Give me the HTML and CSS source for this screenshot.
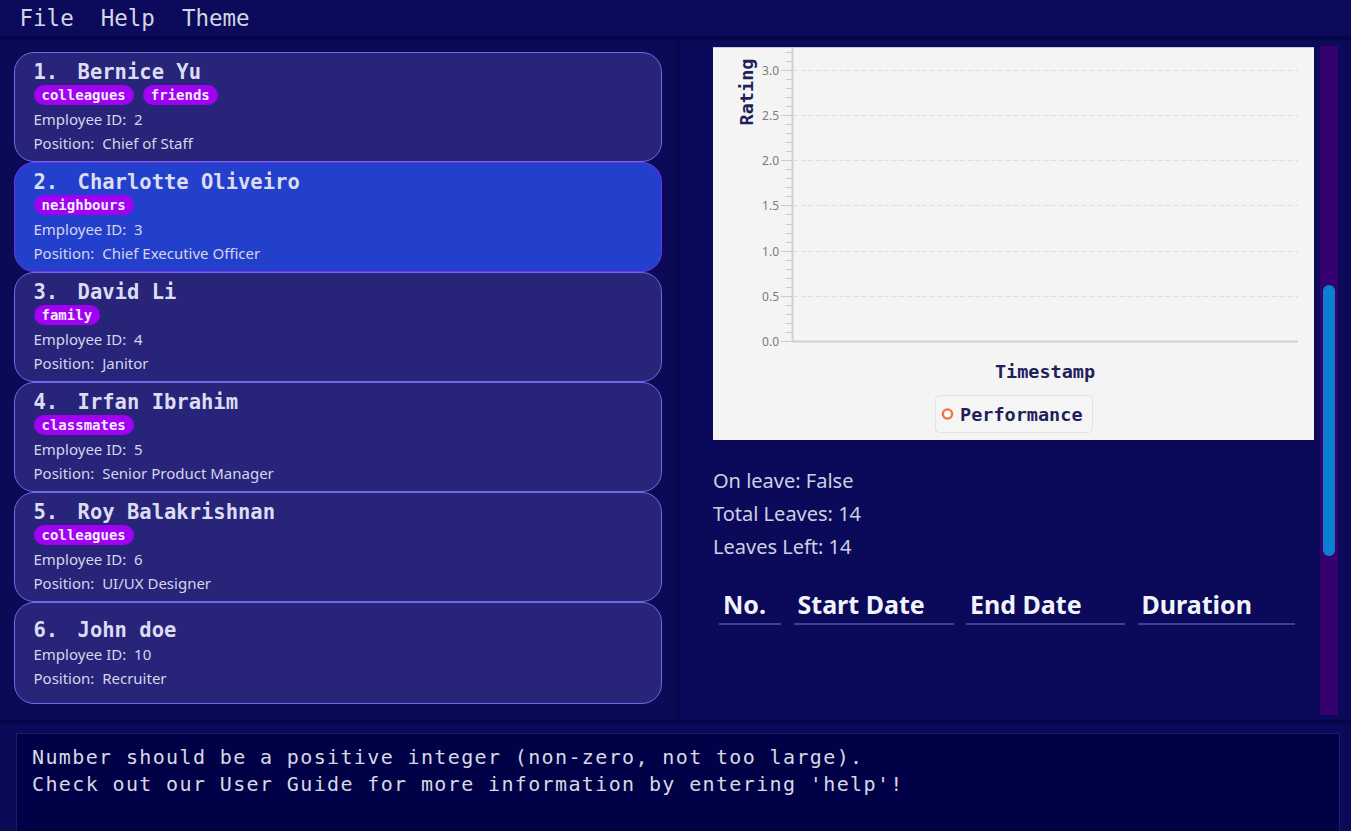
FILE: index.html
```html
<!DOCTYPE html>
<html lang="en">
<head>
<meta charset="utf-8">
<title>Employee Manager</title>
<link rel="stylesheet" href="styles.css">
</head>
<body>
<div class="app">
  <div class="menubar">
    <span class="menu-item">File</span>
    <span class="menu-item">Help</span>
    <span class="menu-item">Theme</span>
  </div>
  <div class="main">
    <div class="list-panel">
      <div class="card">
        <div class="name"><span class="index">1.</span>Bernice Yu</div>
        <div class="tags"><span class="tag">colleagues</span><span class="tag">friends</span></div>
        <div class="info">Employee ID:&nbsp; 2</div>
        <div class="info">Position:&nbsp; Chief of Staff</div>
      </div>
      <div class="card selected">
        <div class="name"><span class="index">2.</span>Charlotte Oliveiro</div>
        <div class="tags"><span class="tag">neighbours</span></div>
        <div class="info">Employee ID:&nbsp; 3</div>
        <div class="info">Position:&nbsp; Chief Executive Officer</div>
      </div>
      <div class="card">
        <div class="name"><span class="index">3.</span>David Li</div>
        <div class="tags"><span class="tag">family</span></div>
        <div class="info">Employee ID:&nbsp; 4</div>
        <div class="info">Position:&nbsp; Janitor</div>
      </div>
      <div class="card">
        <div class="name"><span class="index">4.</span>Irfan Ibrahim</div>
        <div class="tags"><span class="tag">classmates</span></div>
        <div class="info">Employee ID:&nbsp; 5</div>
        <div class="info">Position:&nbsp; Senior Product Manager</div>
      </div>
      <div class="card">
        <div class="name"><span class="index">5.</span>Roy Balakrishnan</div>
        <div class="tags"><span class="tag">colleagues</span></div>
        <div class="info">Employee ID:&nbsp; 6</div>
        <div class="info">Position:&nbsp; UI/UX Designer</div>
      </div>
      <div class="card no-tags">
        <div class="name"><span class="index">6.</span>John doe</div>
        <div class="info">Employee ID:&nbsp; 10</div>
        <div class="info">Position:&nbsp; Recruiter</div>
      </div>
    </div>
    <div class="panel-divider"></div>
    <div class="detail-panel">
      <div class="detail-content">
        <div class="chart">
          <svg width="601" height="393" viewBox="0 0 601 393" xmlns="http://www.w3.org/2000/svg">
            <rect x="0" y="0" width="601" height="393" fill="#f4f4f4"/>
            <line x1="0" y1="0.5" x2="601" y2="0.5" stroke="#c9c9ea" stroke-width="1"/>
            <g stroke="#dedede" stroke-width="1" stroke-dasharray="5 2.6" shape-rendering="crispEdges">
              <line x1="80" y1="249.5" x2="585" y2="249.5"/>
              <line x1="80" y1="204.5" x2="585" y2="204.5"/>
              <line x1="80" y1="158.5" x2="585" y2="158.5"/>
              <line x1="80" y1="113.5" x2="585" y2="113.5"/>
              <line x1="80" y1="68.5" x2="585" y2="68.5"/>
              <line x1="80" y1="23.5" x2="585" y2="23.5"/>
            </g>
            <g stroke="#cbcbcb" stroke-width="1" shape-rendering="crispEdges">
              <line x1="68" y1="294.5" x2="79" y2="294.5"/>
              <line x1="73" y1="285.5" x2="79" y2="285.5"/>
              <line x1="73" y1="276.5" x2="79" y2="276.5"/>
              <line x1="73" y1="267.5" x2="79" y2="267.5"/>
              <line x1="73" y1="258.5" x2="79" y2="258.5"/>
              <line x1="68" y1="249.5" x2="79" y2="249.5"/>
              <line x1="73" y1="240.5" x2="79" y2="240.5"/>
              <line x1="73" y1="231.5" x2="79" y2="231.5"/>
              <line x1="73" y1="222.5" x2="79" y2="222.5"/>
              <line x1="73" y1="213.5" x2="79" y2="213.5"/>
              <line x1="68" y1="204.5" x2="79" y2="204.5"/>
              <line x1="73" y1="195.5" x2="79" y2="195.5"/>
              <line x1="73" y1="186.5" x2="79" y2="186.5"/>
              <line x1="73" y1="177.5" x2="79" y2="177.5"/>
              <line x1="73" y1="167.5" x2="79" y2="167.5"/>
              <line x1="68" y1="158.5" x2="79" y2="158.5"/>
              <line x1="73" y1="149.5" x2="79" y2="149.5"/>
              <line x1="73" y1="140.5" x2="79" y2="140.5"/>
              <line x1="73" y1="131.5" x2="79" y2="131.5"/>
              <line x1="73" y1="122.5" x2="79" y2="122.5"/>
              <line x1="68" y1="113.5" x2="79" y2="113.5"/>
              <line x1="73" y1="104.5" x2="79" y2="104.5"/>
              <line x1="73" y1="95.5" x2="79" y2="95.5"/>
              <line x1="73" y1="86.5" x2="79" y2="86.5"/>
              <line x1="73" y1="77.5" x2="79" y2="77.5"/>
              <line x1="68" y1="68.5" x2="79" y2="68.5"/>
              <line x1="73" y1="59.5" x2="79" y2="59.5"/>
              <line x1="73" y1="50.5" x2="79" y2="50.5"/>
              <line x1="73" y1="41.5" x2="79" y2="41.5"/>
              <line x1="73" y1="32.5" x2="79" y2="32.5"/>
              <line x1="68" y1="23.5" x2="79" y2="23.5"/>
              <line x1="73" y1="14.5" x2="79" y2="14.5"/>
              <line x1="73" y1="5.5" x2="79" y2="5.5"/>
            </g>
            <line x1="79.5" y1="1" x2="79.5" y2="295" stroke="#d0d0d0" stroke-width="2"/>
            <line x1="79" y1="294.5" x2="585" y2="294.5" stroke="#d0d0d0" stroke-width="2"/>
            <g class="tick-label" text-anchor="end">
              <text x="66" y="298.5">0.0</text>
              <text x="66" y="253.5">0.5</text>
              <text x="66" y="208.5">1.0</text>
              <text x="66" y="162.5">1.5</text>
              <text x="66" y="117.5">2.0</text>
              <text x="66" y="72.5">2.5</text>
              <text x="66" y="27.5">3.0</text>
            </g>
            <text class="axis-title" transform="translate(40,45) rotate(-90)" text-anchor="middle">Rating</text>
            <text class="axis-title" x="332" y="331" text-anchor="middle">Timestamp</text>
            <rect x="222.5" y="348.5" width="157" height="37" rx="4" fill="#f5f5f5" stroke="#e3e3e3"/>
            <circle cx="234.5" cy="367" r="4.6" fill="#ffffff" stroke="#f2723f" stroke-width="2.4"/>
            <text class="axis-title" x="247" y="374">Performance</text>
          </svg>
        </div>
        <div class="leave-info">
          <div class="leave-line">On leave: False</div>
          <div class="leave-line">Total Leaves: 14</div>
          <div class="leave-line">Leaves Left: 14</div>
        </div>
        <div class="leave-table">
          <div class="col col-no">No.</div>
          <div class="col col-start">Start Date</div>
          <div class="col col-end">End Date</div>
          <div class="col col-dur">Duration</div>
        </div>
      </div>
      <div class="scrollbar"><div class="thumb"></div></div>
    </div>
  </div>
  <div class="result-panel">
    <div class="result-box">Number should be a positive integer (non-zero, not too large).
Check out our User Guide for more information by entering 'help'!</div>
  </div>
</div>
</body>
</html>
```
FILE: styles.css
```css
html, body {
  margin: 0;
  padding: 0;
}
body {
  width: 1351px;
  height: 831px;
  overflow: hidden;
  background: #0b0a5a;
}
.app {
  display: flex;
  flex-direction: column;
  height: 831px;
}
.menubar {
  height: 36px;
  background: #0b0a5b;
  border-bottom: 4px solid #06064b;
  display: flex;
  align-items: center;
  padding-left: 6px;
  flex: none;
}
.menu-item {
  font-family: "DejaVu Sans Mono", monospace;
  font-size: 22.5px;
  color: #d4d4e2;
  padding: 0 13.5px;
  line-height: 38px;
}
.main {
  display: flex;
  height: 680px;
  flex: none;
  border-bottom: 4px solid #06064b;
}
.list-panel {
  width: 648px;
  background: #0a0a57;
  padding: 12px 14px 0 14px;
  display: flex;
  flex-direction: column;
}
.panel-divider {
  width: 4px;
  background: #07074b;
}
.card {
  height: 110px;
  box-sizing: border-box;
  border: 1.5px solid #6c6ce6;
  border-radius: 20px;
  background: #27247a;
  padding: 6.5px 20px 0 18.5px;
}
.card.selected {
  background: #2340cc;
  border-color: #7430ee;
}
.card.no-tags {
  height: 102px;
  padding-top: 14.5px;
}
.name {
  font-family: "DejaVu Sans Mono", monospace;
  font-weight: bold;
  font-size: 20.5px;
  line-height: 24px;
  color: #dcdcf2;
  white-space: pre;
}
.index {
  margin-right: 19.4px;
}
.tags {
  display: flex;
  gap: 9px;
  margin: 1px 0 2px;
}
.tag {
  font-family: "DejaVu Sans Mono", monospace;
  font-weight: bold;
  font-size: 14px;
  height: 20px;
  line-height: 20px;
  padding: 0 8px;
  border-radius: 10px;
  background: #a100f2;
  color: #f4ecff;
}
.info {
  font-family: "Noto Sans", sans-serif;
  font-size: 15px;
  line-height: 24px;
  color: #d6d6ea;
}
.detail-panel {
  flex: 1;
  display: flex;
  background: #0b0a5a;
}
.detail-content {
  flex: 1;
  padding: 7px 6px 0 33px;
}
.chart {
  width: 601px;
  height: 393px;
}
.chart svg {
  display: block;
}
.tick-label text {
  font-family: "Noto Sans", sans-serif;
  font-size: 12px;
  fill: #7b7b7b;
}
.axis-title {
  font-family: "DejaVu Sans Mono", monospace;
  font-weight: bold;
  font-size: 18.5px;
  fill: #1f1f5c;
}
.leave-info {
  margin-top: 24px;
}
.leave-line {
  font-family: "Noto Sans", sans-serif;
  font-size: 20px;
  line-height: 33px;
  color: #cfcfe2;
}
.leave-table {
  display: flex;
  margin: 25px 0 0 6px;
  gap: 12.5px;
}
.col {
  font-family: "Noto Sans", sans-serif;
  font-weight: bold;
  font-size: 25px;
  line-height: 32px;
  color: #f2f2fa;
  padding: 0 0 3px 4px;
  border-bottom: 2px solid #3e3e9e;
  box-sizing: border-box;
}
.col-no { width: 62px; }
.col-start { width: 160px; }
.col-end { width: 159px; }
.col-dur { width: 157px; }
.scrollbar {
  width: 18px;
  margin: 6px 13px 5px 0;
  background: #36006e;
  position: relative;
}
.thumb {
  position: absolute;
  left: 3px;
  top: 239px;
  width: 12px;
  height: 271px;
  border-radius: 6px;
  background: #0a80d0;
}
.result-panel {
  flex: 1;
  background: #0a0a58;
  padding: 9px 11px 0 16px;
  display: flex;
}
.result-box {
  flex: 1;
  border: 1px solid #1b1b6c;
  border-bottom: none;
  background: #010148;
  padding: 10px 15px 0 15px;
  font-family: "DejaVu Sans Mono", monospace;
  font-size: 20px;
  letter-spacing: 1.37px;
  line-height: 27px;
  color: #d8d8e2;
  white-space: pre;
}
```
